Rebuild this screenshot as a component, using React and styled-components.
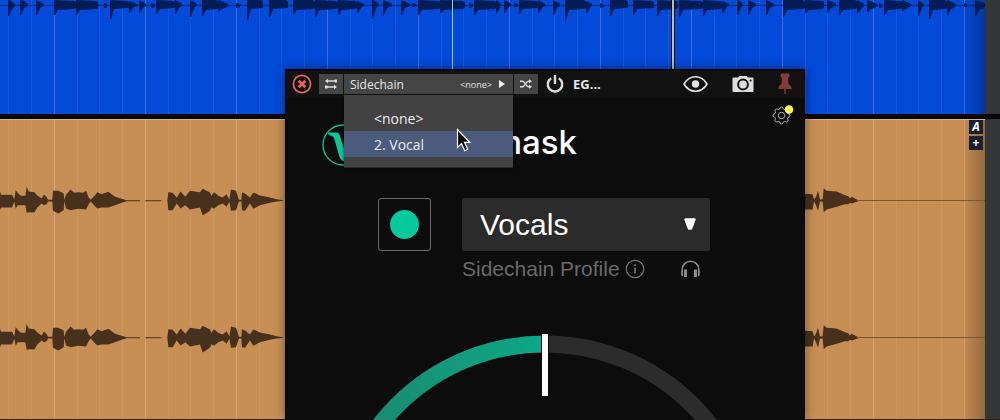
import React from "react";
import styled, { createGlobalStyle } from "styled-components";

const GlobalStyle = createGlobalStyle`
    * {
        box-sizing: border-box;
    }
    body {
        margin: 0;
        background: #333537;
        font-family: "Open Sans", "Noto Sans", sans-serif;
    }
    button, select {
        font-family: inherit;
        margin: 0;
        padding: 0;
        border: none;
        background: none;
        color: inherit;
    }
    svg {
        display: block;
    }
`;

const Desk = styled.div`
    position: relative;
    display: flex;
    flex-direction: column;
    min-height: 100vh;
    overflow: hidden;
`;

const Track = styled.section`
    display: flex;
    flex: ${({ $grow }) => ($grow ? "1" : "none")};
    border-bottom: ${({ $grow }) => ($grow ? "1px solid #2a1f14" : "none")};
`;

const Clip = styled.div`
    position: relative;
    flex: 1;
    min-width: 0;
    overflow: hidden;
    background:
        linear-gradient(to left, rgba(0, 0, 0, 0.26), rgba(0, 0, 0, 0) 24px),
        repeating-linear-gradient(
            to right,
            rgba(255, 255, 255, 0.15) 0 1px,
            transparent 1px 91px
        ) 54px 0 / 2000px 100% no-repeat,
        repeating-linear-gradient(
            to right,
            rgba(255, 255, 255, 0.07) 0 1px,
            transparent 1px 23px,
            rgba(255, 255, 255, 0.07) 23px 24px,
            transparent 24px 45px,
            rgba(255, 255, 255, 0.07) 45px 46px,
            transparent 46px 68px,
            rgba(255, 255, 255, 0.07) 68px 69px,
            transparent 69px 91px
        ) -37px 0 / 2000px 100% no-repeat,
        ${({ $color }) => $color};
    box-shadow: ${({ $rim }) => ($rim ? `inset 0 1px 0 ${$rim}` : "none")};
`;

const Gutter = styled.div`
    width: 15px;
    background: #333537;
`;

const Divider = styled.div`
    height: 5px;
    background: #08080a;
    border-top: 1px solid #000;
    border-bottom: 1px solid #000;
`;

const ClipTools = styled.div`
    position: absolute;
    top: 1px;
    right: 2px;
    display: grid;
    gap: 2px;
`;

const ClipButton = styled.button`
    width: 14px;
    height: 14px;
    background: #1b1f33;
    color: #fff;
    font-size: 12px;
    line-height: 14px;
    font-weight: bold;
    font-style: ${({ $italic }) => ($italic ? "italic" : "normal")};
`;

const Playhead = styled.div`
    position: absolute;
    top: 0;
    bottom: 0;
    left: ${({ $x }) => $x}px;
    width: ${({ $wide }) => ($wide ? "4px" : "1px")};
    background: ${({ $wide }) => ($wide ? "#c3bbb0" : "#a9c3f0")};
    border: solid #0b0f1e;
    border-width: ${({ $wide }) => ($wide ? "0 1px" : "0")};
`;

const Plugin = styled.main`
    position: absolute;
    top: 69px;
    bottom: 0;
    left: 285px;
    width: 520px;
    border: 1px solid #000;
    border-bottom: none;
    background: #0c0c0c;
    color: #ddd;
    box-shadow: 0 0 10px rgba(0, 0, 0, 0.45);
`;

const Toolbar = styled.header`
    display: flex;
    align-items: center;
    height: 28px;
    padding: 0 12px 0 6px;
    background: #111;
`;

const IconButton = styled.button`
    display: flex;
    align-items: center;
    justify-content: center;
    height: 20px;
`;

const Routing = styled.div`
    position: relative;
    display: flex;
    gap: 1px;
    margin: 0 8px 0 7px;
`;

const RoutingButton = styled(IconButton)`
    width: 24px;
    background: #454545;
`;

const SidechainButton = styled.button`
    display: flex;
    align-items: center;
    width: 169px;
    height: 20px;
    padding: 0 7px 0 6px;
    background: #454545;
    color: #e4e4e4;
    font-size: 12px;
    gap: 7px;
`;

const Current = styled.span`
    margin-left: auto;
    font-size: 9px;
`;

const Menu = styled.ul`
    position: absolute;
    z-index: 2;
    top: 21px;
    left: 25px;
    width: 169px;
    margin: 0;
    padding: 10px 0;
    list-style: none;
    background: #424242;
    border-bottom: 1px solid #2c2c2c;
    box-shadow: 0 1px 3px rgba(0, 0, 0, 0.6);
`;

const MenuItem = styled.button`
    display: block;
    width: 100%;
    height: 26px;
    padding-left: 30px;
    text-align: left;
    font-size: 14px;
    color: #ececec;
    background: ${({ $active }) => ($active ? "#4a5b7e" : "none")};
`;

const Pointer = styled.svg`
    position: absolute;
    z-index: 3;
    top: 54px;
    left: 137px;
`;

const Preset = styled.button`
    margin-left: 9px;
    font-size: 13px;
    font-weight: bold;
    color: #e8e8e8;
`;

const ViewTools = styled.div`
    display: flex;
    align-items: center;
    gap: 24px;
    margin-left: auto;
`;

const Head = styled.div`
    display: flex;
    justify-content: space-between;
    align-items: flex-start;
    padding: 7px 10px 0 36px;
`;

const Brand = styled.h1`
    display: flex;
    align-items: flex-start;
    justify-content: space-between;
    width: 255px;
    height: 42px;
    margin: 19px 0 0;
    font-family: Inter, sans-serif;
    font-size: 33px;
    line-height: 36px;
    font-weight: 500;
    color: #fff;
`;

const Controls = styled.div`
    display: grid;
    grid-template-columns: 53px 248px;
    column-gap: 31px;
    row-gap: 6px;
    margin: 32px 0 0 92px;
    font-family: "Liberation Sans", Arial, sans-serif;
`;

const Learn = styled.button`
    display: flex;
    align-items: center;
    justify-content: center;
    height: 53px;
    border: 1px solid #6a6a6a;
    border-radius: 3px;
`;

const Dot = styled.span`
    width: 29px;
    height: 29px;
    border-radius: 50%;
    background: #06c99b;
`;

const SelectBox = styled.div`
    display: grid;
    align-items: center;
    background: #2b2b2b;
    border-radius: 2px;

    > * {
        grid-area: 1 / 1;
    }
    > svg {
        justify-self: end;
        margin-right: 13px;
        pointer-events: none;
    }
`;

const ProfileSelect = styled.select`
    appearance: none;
    width: 100%;
    height: 53px;
    padding: 0 18px;
    font-size: 30px;
    color: #fff;
`;

const Caption = styled.div`
    grid-column: 2;
    display: flex;
    align-items: center;
    gap: 5px;
    height: 24px;
    padding-right: 10px;
    font-size: 21px;
    color: #696969;
    white-space: nowrap;
`;

const Listen = styled(IconButton)`
    margin-left: auto;
`;

const Dial = styled.svg`
    position: absolute;
    left: 0;
    top: 250px;
    width: 100%;
    height: calc(100% - 250px);
`;

// each hit: start, end, height above, spike below, body below
const drumHits = [
    [8, 15, 6, 11, 3], [20, 28, 6, 10, 2], [36, 44, 5, 10, 2], [54, 76, 5, 10, 4],
    [76, 98, 5, 10, 4], [104, 107, 2, 3, 1], [110, 129, 5, 14, 3], [129, 137, 4, 8, 2],
    [139, 146, 5, 8, 2], [151, 155, 2, 3, 1], [156, 175, 5, 9, 3], [175, 182, 5, 9, 2],
    [190, 197, 5, 12, 2], [202, 218, 6, 11, 4], [218, 228, 5, 6, 3], [236, 241, 2, 3, 1],
    [247, 263, 6, 15, 3], [269, 288, 6, 12, 3], [293, 315, 6, 9, 4], [315, 338, 5, 12, 4],
    [338, 357, 5, 10, 4], [357, 364, 4, 8, 2], [372, 379, 6, 14, 2], [383, 392, 5, 10, 2],
    [401, 410, 5, 10, 2], [412, 416, 2, 2, 1], [418, 440, 5, 10, 4], [440, 465, 5, 8, 4],
    [469, 473, 2, 3, 1], [474, 496, 5, 10, 4], [496, 501, 5, 8, 2], [504, 511, 5, 8, 2],
    [514, 518, 2, 2, 1], [519, 538, 5, 9, 3], [538, 545, 5, 8, 2], [553, 560, 5, 10, 2],
    [565, 586, 6, 15, 4], [586, 592, 4, 8, 2], [600, 603, 2, 3, 1], [610, 628, 6, 11, 3],
    [633, 654, 5, 10, 3], [657, 678, 5, 11, 4], [679, 703, 5, 12, 4], [703, 722, 5, 11, 4],
    [722, 729, 4, 8, 2], [737, 743, 6, 10, 2], [748, 756, 5, 10, 2], [766, 774, 5, 10, 2],
    [783, 805, 6, 12, 4], [805, 824, 5, 8, 4], [827, 836, 5, 8, 2], [839, 857, 6, 10, 4],
    [857, 864, 5, 8, 3], [867, 877, 5, 7, 3], [879, 882, 2, 3, 1], [884, 902, 5, 10, 4],
    [902, 911, 5, 6, 3], [918, 924, 5, 11, 2], [929, 947, 6, 14, 4], [947, 956, 5, 10, 3],
    [964, 967, 2, 2, 1], [975, 986, 5, 11, 4],
];

const DRUM_Y = 5;

const drumPath = drumHits
    .map(([a, b, up, spike, low]) => {
        const long = b - a > 12;
        const mid = a + (b - a) * (long ? 0.9 : 0.7);
        const top = long ? up - 1 : up / 2;
        const tail = long ? 3 : 1;
        return [
            `M${a} ${DRUM_Y - up}`,
            `L${mid} ${DRUM_Y - top}`,
            `L${b} ${DRUM_Y - tail}`,
            `L${b} ${DRUM_Y + tail}`,
            `L${mid} ${DRUM_Y + low}`,
            `L${a + 4} ${DRUM_Y + low + 1}`,
            `L${a + 1} ${DRUM_Y + spike}`,
            `L${a} ${DRUM_Y + spike}Z`,
        ].join("");
    })
    .join("");

// x, height above the axis, depth below it, in thirds of a pixel
const phrases = [
    [
        [0, 27, 29], [3, 17, 21], [36, 17, 21], [43, 4, 4], [47, 31, 25], [53, 23, 14],
        [62, 14, 14], [76, 14, 14], [80, 41, 37], [86, 27, 35], [103, 25, 36], [112, 15, 21],
        [125, 6, 9], [132, 18, 14], [140, 10, 11], [144, 2, 3], [157, 2, 3], [159, 29, 31],
        [175, 29, 39], [191, 21, 29], [193, 2, 2], [198, 17, 24], [212, 33, 29], [222, 23, 27],
        [235, 25, 25], [250, 23, 26], [258, 29, 27], [266, 9, 11], [272, 2, 3], [285, 16, 17],
        [292, 25, 24], [305, 19, 21], [325, 26, 21], [345, 11, 14], [365, 5, 7], [380, 1, 2],
        [420, 1, 2],
    ],
    [[436, 1, 2], [484, 1, 2]],
    [
        [502, 1, 1], [505, 25, 29], [518, 23, 29], [530, 9, 9], [542, 27, 24], [556, 11, 14],
        [570, 29, 27], [600, 25, 21], [608, 35, 45], [630, 24, 31], [634, 14, 20], [642, 25, 25],
        [655, 14, 14], [668, 9, 9], [680, 19, 19], [688, 3, 4], [693, 33, 31], [708, 29, 29],
        [714, 11, 11], [717, 2, 3], [724, 2, 3], [726, 25, 29], [735, 21, 31], [750, 9, 9],
        [760, 24, 25], [780, 15, 14], [810, 9, 7], [830, 4, 3], [850, 1, 1],
    ],
    [
        [2400, 21, 27], [2438, 19, 27], [2442, 3, 2], [2448, 11, 14], [2454, 29, 31],
        [2460, 3, 3], [2468, 4, 4], [2471, 37, 35], [2480, 29, 27], [2510, 27, 19],
        [2535, 16, 11], [2545, 13, 11], [2550, 6, 7], [2555, 11, 9], [2575, 1, 2],
    ],
];

const voicePath = (axis) =>
    phrases
        .map((points) => {
            const over = points.map(([x, up]) => `${x / 3} ${axis - up / 3}`);
            const under = points.map(([x, , down]) => `${x / 3} ${axis + down / 3}`).reverse();
            return `M${[...over, ...under].join("L")}Z`;
        })
        .join("");

const DrumWave = () => (
    <svg width="100%" height="114" aria-hidden="true">
        <rect y="5" width="100%" height="1" fill="#03266f" />
        <path d={drumPath} fill="#031c55" />
    </svg>
);

const VoiceWave = () => (
    <svg width="100%" height="300" aria-hidden="true">
        {[81, 218].map((axis) => (
            <g key={axis} fill="#47311c">
                <path d={voicePath(axis + 0.5)} />
                <rect x="857" y={axis} width="100%" height="1" fill="#7b5730" />
            </g>
        ))}
    </svg>
);

const CloseIcon = () => (
    <svg width="20" height="20" viewBox="0 0 20 20" fill="none" stroke="#ee625c">
        <circle cx="10" cy="10" r="8.6" strokeWidth="1.7" />
        <path d="M6.7 6.7l6.6 6.6M13.3 6.7l-6.6 6.6" strokeWidth="2.8" />
    </svg>
);

const RouteIcon = () => (
    <svg width="14" height="12" viewBox="0 0 14 12">
        <path d="M2 3h10M2 9h10" stroke="#ddd" strokeWidth="1.6" />
        <path d="M1 3L4 .8v4.400zM13 9l-3-2.200v4.400z" fill="#ddd" />
        <path d="M10.500 1.500H13v3h-2.500zM1 7.500h2.500v3H1z" fill="#ddd" />
    </svg>
);

const ShuffleIcon = () => (
    <svg width="14" height="10" viewBox="0 0 14 10" fill="none" stroke="#ddd" strokeWidth="1.4">
        <path d="M1 2.2h2.5c2.5 0 3.5 5.6 6 5.6h2M1 7.8h2.5c2.5 0 3.5-5.6 6-5.6h2" />
        <path d="M10 .2L13 2.2L10 4.2zM10 5.8L13 7.8L10 9.8z" fill="#ddd" stroke="none" />
    </svg>
);

const PowerIcon = () => (
    <svg width="18" height="20" viewBox="0 0 18 20" fill="none" stroke="#ddd" strokeWidth="2.4">
        <path d="M5.2 4.2a7.2 7.2 0 1 0 7.6 0M9 1v9" />
    </svg>
);

const EyeIcon = () => (
    <svg width="25" height="18" viewBox="0 0 25 18">
        <path
            d="M1 9C6.5-.6 18.5-.6 24 9C18.5 18.6 6.5 18.6 1 9z"
            fill="none"
            stroke="#e3e3e3"
            strokeWidth="1.6"
        />
        <circle cx="12.5" cy="9" r="3.7" fill="#e3e3e3" />
    </svg>
);

const CameraIcon = () => (
    <svg width="22" height="18" viewBox="0 0 22 18">
        <path
            d="M1.5 2.5H6L7.5 1h7L16 2.5h4.500q1 0 1 1v12.500q0 1-1 1h-19q-1 0-1-1V3.500q0-1 1-1z"
            fill="#dedede"
        />
        <circle cx="11" cy="9.5" r="4.9" fill="#dedede" stroke="#151515" strokeWidth="2" />
        <circle cx="18.6" cy="5.4" r="1" fill="#151515" />
    </svg>
);

const PinIcon = () => (
    <svg width="14" height="22" viewBox="0 0 14 22">
        <path
            d="M2.500 2q0-1.500 1.500-1.500h6q1.500 0 1.500 1.500v1q0 1.500-1.500 1.500l.5 6.500q3 1.500 3.200 5H.3q.2-3.500 3.200-5L4 4.500Q2.500 4.500 2.500 3z"
            fill="#833b3b"
        />
        <path d="M7 15v6" stroke="#833b3b" strokeWidth="1.4" />
    </svg>
);

const teeth = Array.from({ length: 64 }, (_, i) => {
    const angle = (i / 64) * Math.PI * 2;
    const wave = Math.cos(angle * 8);
    const r = 7.6 + Math.max(-0.9, Math.min(0.9, wave * 1.8));
    return `${9.5 + r * Math.cos(angle)} ${11.5 + r * Math.sin(angle)}`;
}).join("L");

const GearIcon = () => (
    <svg width="22" height="22" viewBox="0 0 22 22" fill="none" stroke="#b4b4b4">
        <path d={`M${teeth}Z`} />
        <circle cx="9.5" cy="11.5" r="3.2" />
        <circle cx="17" cy="5.5" r="4.3" fill="#fdf951" stroke="none" />
    </svg>
);

const Logo = () => (
    <svg width="42" height="42" viewBox="0 0 42 42">
        <circle cx="21" cy="21" r="20" fill="none" stroke="#0cc79b" strokeWidth="1.3" />
        <path
            d="M5.5 8.500h9q2.500 0 3.300 3L25 34v4q-6-.5-7.500-5L12.500 15.500q-1-3.500-3.500-3.700Q6.500 11.500 5.500 8.500z"
            fill="#0cc79b"
        />
    </svg>
);

const InfoIcon = () => (
    <svg width="20" height="20" viewBox="0 0 20 20" fill="none" stroke="#777">
        <circle cx="10" cy="10" r="8.7" strokeWidth="1.2" />
        <path d="M10 8.5v6M10 5.3v1.8" strokeWidth="1.6" />
    </svg>
);

const HeadphonesIcon = () => (
    <svg width="19" height="18" viewBox="0 0 19 18" fill="none" stroke="#8c8c8c">
        <path d="M1.200 15V9.500a8.300 8.300 0 0 1 16.600 0V15" strokeWidth="1.5" />
        <path d="M.5 10.500l1.500-.5v6.500l-1.500-1zM3 9.500h3V17H3zM18.500 10.500l-1.500-.5v6.500l1.500-1zM16 9.500h-3V17h3z" fill="#8c8c8c" stroke="none" />
    </svg>
);

const SidechainMenu = () => (
    <Routing>
        <RoutingButton aria-label="Routing">
            <RouteIcon />
        </RoutingButton>
        <SidechainButton aria-haspopup="menu" aria-expanded="true">
            Sidechain
            <Current>&lt;none&gt;</Current>
            <svg width="7" height="8">
                <path d="M0 0L6 4L0 8z" fill="#eee" />
            </svg>
        </SidechainButton>
        <RoutingButton aria-label="Swap">
            <ShuffleIcon />
        </RoutingButton>
        <Menu>
            <li>
                <MenuItem>&lt;none&gt;</MenuItem>
            </li>
            <li>
                <MenuItem $active>2. Vocal</MenuItem>
            </li>
        </Menu>
        <Pointer width="15" height="25" viewBox="0 0 15 25">
            <path
                d="M1.5 1.5v18l4-4 3.2 7.2 3-1.4-3.2-7h5.2z"
                fill="#0a0a0a"
                stroke="#fff"
                strokeWidth="1.2"
            />
        </Pointer>
    </Routing>
);

const App = () => {
    return (
        <Desk>
            <GlobalStyle />
            <Track>
                <Clip $color="#034ad9">
                    <DrumWave />
                    <Playhead $x={452} />
                    <Playhead $x={671} $wide />
                </Clip>
                <Gutter />
            </Track>
            <Divider />
            <Track $grow>
                <Clip $color="#c88f54" $rim="#dfb079">
                    <VoiceWave />
                    <ClipTools>
                        <ClipButton $italic>A</ClipButton>
                        <ClipButton>+</ClipButton>
                    </ClipTools>
                </Clip>
                <Gutter />
            </Track>
            <Plugin>
                <Toolbar>
                    <IconButton aria-label="Close">
                        <CloseIcon />
                    </IconButton>
                    <SidechainMenu />
                    <IconButton aria-label="Power">
                        <PowerIcon />
                    </IconButton>
                    <Preset>EG...</Preset>
                    <ViewTools>
                        <IconButton aria-label="Show">
                            <EyeIcon />
                        </IconButton>
                        <IconButton aria-label="Snapshot">
                            <CameraIcon />
                        </IconButton>
                        <IconButton aria-label="Pin">
                            <PinIcon />
                        </IconButton>
                    </ViewTools>
                </Toolbar>
                <Head>
                    <Brand>
                        <Logo />
                        mask
                    </Brand>
                    <IconButton aria-label="Settings">
                        <GearIcon />
                    </IconButton>
                </Head>
                <Controls>
                    <Learn aria-label="Learn">
                        <Dot />
                    </Learn>
                    <SelectBox>
                        <ProfileSelect id="profile" defaultValue="Vocals">
                            <option>Vocals</option>
                        </ProfileSelect>
                        <svg width="14" height="16" viewBox="0 0 14 16">
                            <path
                                d="M2.500 2.500h9L8 11.500H6z"
                                fill="#fff"
                                stroke="#fff"
                                strokeWidth="2.4"
                                strokeLinejoin="round"
                            />
                        </svg>
                    </SelectBox>
                    <Caption>
                        <label htmlFor="profile">Sidechain Profile</label>
                        <InfoIcon />
                        <Listen aria-label="Listen">
                            <HeadphonesIcon />
                        </Listen>
                    </Caption>
                </Controls>
                <Dial aria-hidden="true">
                    <defs>
                        <linearGradient
                            id="amount"
                            gradientUnits="userSpaceOnUse"
                            x1="90"
                            y1="100"
                            x2="259"
                            y2="20"
                        >
                            <stop offset="0" stopColor="#198b71" />
                            <stop offset="1" stopColor="#0ca886" />
                        </linearGradient>
                    </defs>
                    <g fill="none" strokeWidth="17">
                        <path d="M50 233A209 209 0 0 1 259 24" stroke="url(#amount)" />
                        <path d="M259 24A209 209 0 0 1 468 233" stroke="#2c2c2c" />
                    </g>
                    <rect x="255" y="14" width="8" height="62" fill="#0c0c0c" />
                    <rect x="256" y="14" width="6" height="62" fill="#fff" />
                </Dial>
            </Plugin>
        </Desk>
    );
};

export default App;
